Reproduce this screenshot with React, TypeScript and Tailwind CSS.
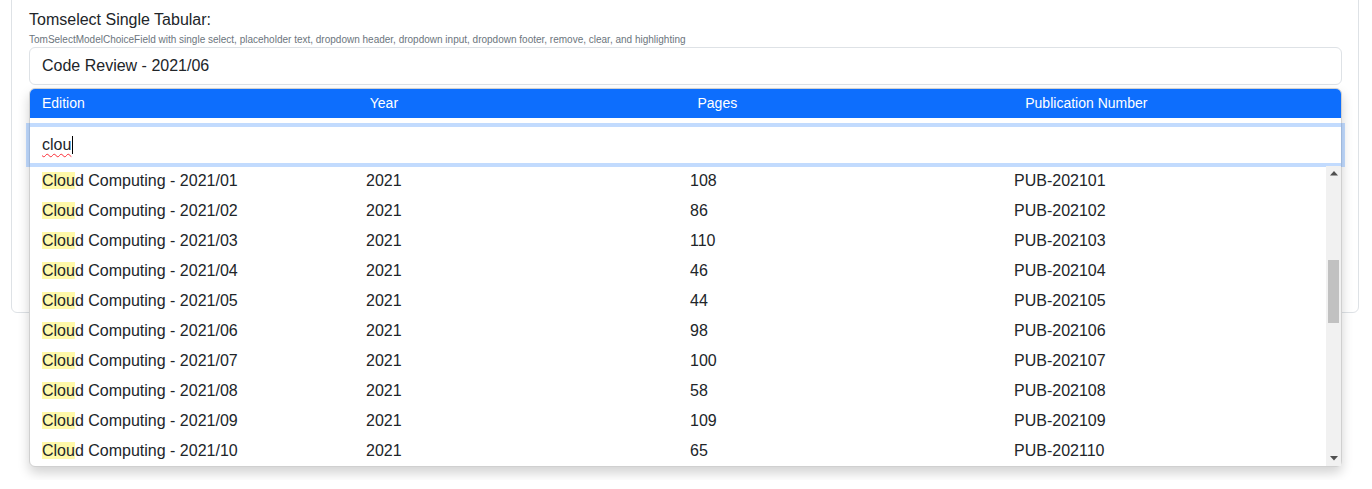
const ROWS = [
  { edition: "01", pages: 108 },
  { edition: "02", pages: 86 },
  { edition: "03", pages: 110 },
  { edition: "04", pages: 46 },
  { edition: "05", pages: 44 },
  { edition: "06", pages: 98 },
  { edition: "07", pages: 100 },
  { edition: "08", pages: 58 },
  { edition: "09", pages: 109 },
  { edition: "10", pages: 65 },
];

const HEADERS = ["Edition", "Year", "Pages", "Publication Number"];

function ScrollArrow({ down }: { down?: boolean }) {
  return (
    <div className="flex h-[15px] items-center justify-center">
      <svg width="8" height="5" viewBox="0 0 8 5" aria-hidden="true">
        <path d={down ? "M0 0h8L4 4.5z" : "M0 4.5h8L4 0z"} fill="#505050" />
      </svg>
    </div>
  );
}

export default function App() {
  return (
    <div className="min-h-screen bg-white font-['Liberation_Sans',Arial,sans-serif] text-[#212529]">
      <div className="ml-[11px] mr-[13px] -mt-[9px] rounded-md border border-[#dee2e6] pl-[17px] pr-[16px] pt-4 pb-[34px]">
        <label className="block text-base leading-6">Tomselect Single Tabular:</label>
        <div className="text-[10px] leading-[15px] text-[#6c757d]">
          TomSelectModelChoiceField with single select, placeholder text, dropdown header, dropdown input, dropdown
          footer, remove, clear, and highlighting
        </div>

        <div className="relative">
          <div className="flex h-[38px] items-center rounded-md border border-[#dee2e6] px-3 text-base">
            Code Review - 2021/06
          </div>

          <div className="absolute left-0 right-0 top-full z-10 mt-[3px] rounded-md border border-[#d0d0d0] bg-white shadow-[0_6px_12px_rgba(0,0,0,0.175)]">
            <div className="grid grid-cols-4 rounded-t-[5px] bg-[#0d6efd] py-1 text-sm leading-[21px] text-white">
              {HEADERS.map((h) => (
                <div key={h} className="px-3">
                  {h}
                </div>
              ))}
            </div>

            <div className="pt-[9px]">
              <div className="flex h-[36px] items-center bg-white px-3 text-base shadow-[0_0_0_4px_rgba(13,110,253,0.25)]">
                <span className="underline decoration-red-500 decoration-wavy decoration-1 underline-offset-[3px]">
                  clou
                </span>
                <span className="ml-px h-[18px] w-px bg-black" />
              </div>
            </div>

            <div className="mt-[3px] flex h-[300px]">
              <div className="flex-1">
                {ROWS.map((r) => (
                  <div key={r.edition} className="grid h-[30px] grid-cols-4 items-center text-base">
                    <div className="px-3">
                      <span className="bg-[rgba(255,237,40,0.4)]">Clou</span>d Computing - 2021/{r.edition}
                    </div>
                    <div className="px-3">2021</div>
                    <div className="px-3">{r.pages}</div>
                    <div className="px-3">PUB-2021{r.edition}</div>
                  </div>
                ))}
              </div>
              <div className="flex w-[15px] flex-col bg-[#f1f1f1]">
                <ScrollArrow />
                <div className="h-[79px]" />
                <div className="mx-[2px] h-[63px] bg-[#c1c1c1]" />
                <div className="flex-1" />
                <ScrollArrow down />
              </div>
            </div>
          </div>
        </div>

        <div className="mt-[155px] h-[38px] rounded-md border border-[#dee2e6]" />
      </div>
    </div>
  );
}
